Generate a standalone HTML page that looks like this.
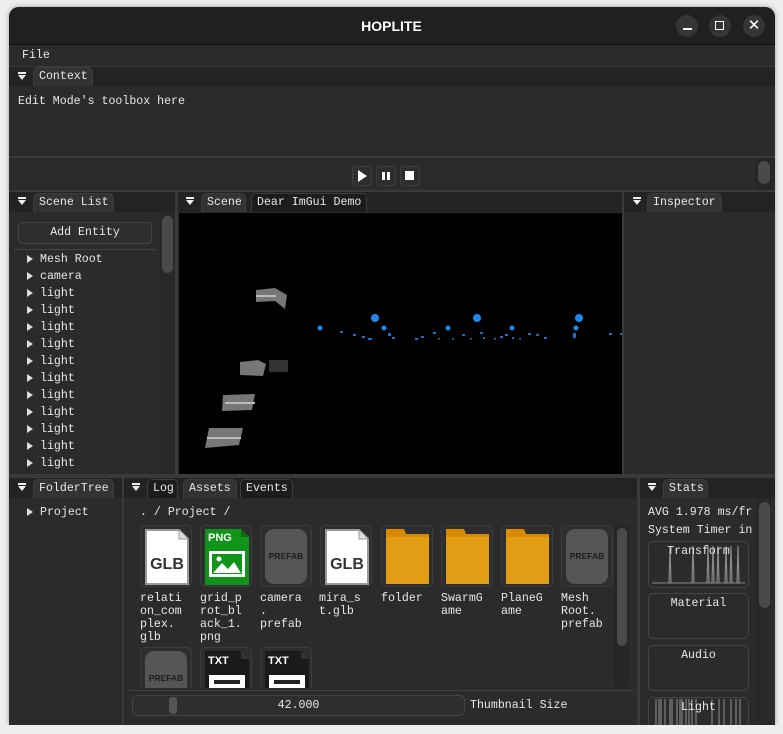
<!DOCTYPE html>
<html><head><meta charset="utf-8"><style>
*{margin:0;padding:0;box-sizing:border-box}
body{width:783px;height:734px;background:#efefef;position:relative;overflow:hidden;font-family:"Liberation Mono",monospace;font-size:11.6px;color:#e8e8e8}
.a{position:absolute}
.t{position:absolute;white-space:pre;line-height:13px}
.win{left:9px;top:7px;width:766px;height:718px;background:#2b2b2b;border-radius:10px 10px 0 0;overflow:hidden;box-shadow:0 0 6px rgba(0,0,0,.35)}
.tabbar{position:absolute;background:#232323;height:20px}
.tab{position:absolute;height:19px;background:#333;border-radius:5px 5px 0 0;border:1px solid #3d3d3d;border-bottom:none;padding:2px 0 0 5px}
.tab.dk{background:#1c1c1c}
.col{position:absolute;width:0;height:0;border-left:4px solid transparent;border-right:4px solid transparent;border-top:5px solid #eee}
.col:before{content:"";position:absolute;left:-4px;top:-8px;width:8px;height:2px;background:#eee}
.tri{position:absolute;width:0;height:0;border-top:4px solid transparent;border-bottom:4px solid transparent;border-left:6px solid #ddd}
.sep{position:absolute;background:#3a3a3a}
.tile{position:absolute;width:52px;height:62px;border:1px solid #3c3c3c;border-radius:5px;background:#2e2e2e}
.lbl{position:absolute;white-space:pre;line-height:13px}
.box{position:absolute;left:648px;width:101px;border:1px solid #444;border-radius:5px;background:#2b2b2b}
</style></head><body>
<div class="a win">
</div>
<!-- title bar -->
<div class="a" style="left:9px;top:7px;width:766px;height:37px;background:#202020;border-radius:10px 10px 0 0"></div>
<div class="a" style="left:0;top:18px;width:783px;text-align:center;font-family:'Liberation Sans',sans-serif;font-weight:bold;font-size:14px;color:#fff">HOPLITE</div>
<div class="a" style="left:676px;top:15px;width:22px;height:22px;border-radius:50%;background:#353535"></div>
<div class="a" style="left:683px;top:28px;width:9px;height:1.5px;background:#fff"></div>
<div class="a" style="left:709px;top:15px;width:22px;height:22px;border-radius:50%;background:#353535"></div>
<div class="a" style="left:715px;top:21px;width:9px;height:9px;border:1.3px solid #fff"></div>
<div class="a" style="left:743px;top:15px;width:22px;height:22px;border-radius:50%;background:#353535;color:#fff;font-family:'Liberation Sans',sans-serif;font-size:15px;text-align:center;line-height:22px">✕</div>
<div class="a" style="left:9px;top:44px;width:766px;height:1px;background:#111"></div>
<!-- menu -->
<div class="t" style="left:22px;top:49px">File</div>
<div class="sep" style="left:9px;top:66px;width:766px;height:1px"></div>
<div class="tabbar" style="left:9px;top:67px;width:766px;height:19px"></div>
<div class="col" style="left:18px;top:75px"></div>
<div class="tab" style="left:33px;top:67px;width:60px">Context</div>
<div class="t" style="left:18px;top:95px">Edit Mode's toolbox here</div>
<div class="sep" style="left:9px;top:156px;width:766px;height:2px"></div>
<div class="a" style="left:755px;top:158px;width:20px;height:32px;background:#262626"></div>
<div class="a" style="left:758px;top:161px;width:12px;height:23px;background:#4a4a4a;border-radius:6px"></div>
<div class="a" style="left:352px;top:166px;width:20px;height:20px;border:1px solid #3e3e3e;border-radius:4px;background:#2e2e2e"></div>
<div class="a" style="left:358px;top:170px;width:0;height:0;border-top:6px solid transparent;border-bottom:6px solid transparent;border-left:9px solid #fff"></div>
<div class="a" style="left:376px;top:166px;width:20px;height:20px;border:1px solid #3e3e3e;border-radius:4px;background:#2e2e2e"></div>
<div class="a" style="left:382px;top:172px;width:3px;height:8px;background:#fff"></div>
<div class="a" style="left:387px;top:172px;width:3px;height:8px;background:#fff"></div>
<div class="a" style="left:400px;top:166px;width:20px;height:20px;border:1px solid #3e3e3e;border-radius:4px;background:#2e2e2e"></div>
<div class="a" style="left:405px;top:171px;width:9px;height:9px;background:#fff"></div>
<div class="sep" style="left:9px;top:190px;width:766px;height:2px"></div>
<!-- scene list -->
<div class="tabbar" style="left:9px;top:192px;width:166px"></div>
<div class="col" style="left:18px;top:200px"></div>
<div class="tab" style="left:33px;top:193px;width:81px">Scene List</div>
<div class="a" style="left:18px;top:222px;width:134px;height:22px;border:1px solid #444;border-radius:4px;background:#2e2e2e;text-align:center;line-height:20px">Add Entity</div>
<div class="a" style="left:160px;top:213px;width:15px;height:261px;background:#282828"></div>
<div class="a" style="left:162px;top:216px;width:11px;height:57px;background:#4a4a4a;border-radius:6px"></div>
<div class="a" style="left:14px;top:249px;width:142px;height:1px;background:#444"></div>
<div class="tri" style="left:27px;top:255px"></div><div class="t" style="left:40px;top:253px">Mesh Root</div>
<div class="tri" style="left:27px;top:272px"></div><div class="t" style="left:40px;top:270px">camera</div>
<div class="tri" style="left:27px;top:289px"></div><div class="t" style="left:40px;top:287px">light</div>
<div class="tri" style="left:27px;top:306px"></div><div class="t" style="left:40px;top:304px">light</div>
<div class="tri" style="left:27px;top:323px"></div><div class="t" style="left:40px;top:321px">light</div>
<div class="tri" style="left:27px;top:340px"></div><div class="t" style="left:40px;top:338px">light</div>
<div class="tri" style="left:27px;top:357px"></div><div class="t" style="left:40px;top:355px">light</div>
<div class="tri" style="left:27px;top:374px"></div><div class="t" style="left:40px;top:372px">light</div>
<div class="tri" style="left:27px;top:391px"></div><div class="t" style="left:40px;top:389px">light</div>
<div class="tri" style="left:27px;top:408px"></div><div class="t" style="left:40px;top:406px">light</div>
<div class="tri" style="left:27px;top:425px"></div><div class="t" style="left:40px;top:423px">light</div>
<div class="tri" style="left:27px;top:442px"></div><div class="t" style="left:40px;top:440px">light</div>
<div class="tri" style="left:27px;top:459px"></div><div class="t" style="left:40px;top:457px">light</div>
<div class="sep" style="left:175px;top:192px;width:3px;height:283px"></div>
<!-- scene -->
<div class="tabbar" style="left:178px;top:192px;width:446px"></div>
<div class="col" style="left:186px;top:200px"></div>
<div class="tab" style="left:201px;top:193px;width:45px">Scene</div>
<div class="tab dk" style="left:251px;top:193px;width:116px">Dear ImGui Demo</div>
<div class="a" style="left:179px;top:213px;width:443px;height:261px;background:#000;overflow:hidden">
<svg width="443" height="261" viewBox="179 213 443 261">
<g fill="#777"><polygon points="256,290 275,288 287,295 285,309 275,301 256,302"/><polygon points="240,362 258,360 266,364 263,376 240,375"/><polygon points="223,395 255,394 252,410 222,411"/><polygon points="209,428 243,428 239,445 205,448"/></g>
<g fill="#bbb"><rect x="256" y="295" width="20" height="2"/><rect x="225" y="402" width="30" height="2"/><rect x="207" y="437" width="34" height="2"/></g>
<rect x="269" y="360" width="19" height="12" fill="#333"/>
<g fill="#1e88f0"><circle cx="375" cy="318" r="4"/><circle cx="477" cy="318" r="4"/><circle cx="579" cy="318" r="4"/><circle cx="320" cy="328" r="2.5"/><circle cx="384" cy="328" r="2.5"/><circle cx="448" cy="328" r="2.5"/><circle cx="512" cy="328" r="2.5"/><circle cx="576" cy="328" r="2.5"/></g>
<g fill="#1c6ec4"><rect x="340" y="331" width="3" height="2"/><rect x="353" y="334" width="3" height="2"/><rect x="362" y="336" width="3" height="2"/><rect x="368" y="338" width="4" height="2"/><rect x="388" y="333" width="3" height="3"/><rect x="392" y="337" width="3" height="2"/><rect x="415" y="338" width="3" height="2"/><rect x="421" y="336" width="3" height="2"/><rect x="433" y="332" width="3" height="2"/><rect x="438" y="338" width="2" height="1.5"/><rect x="452" y="338" width="2" height="1.5"/><rect x="462" y="334" width="3" height="2"/><rect x="470" y="338" width="2" height="1.5"/><rect x="480" y="332" width="3" height="2"/><rect x="483" y="337" width="2" height="2"/><rect x="494" y="338" width="2" height="1.5"/><rect x="500" y="336" width="3" height="2"/><rect x="505" y="334" width="3" height="2"/><rect x="512" y="337" width="2" height="2"/><rect x="519" y="338" width="2" height="1.5"/><rect x="528" y="333" width="3" height="2"/><rect x="536" y="334" width="3" height="2"/><rect x="544" y="337" width="3" height="2"/><rect x="573" y="333" width="3" height="5"/><rect x="609" y="333" width="3" height="2"/><rect x="620" y="333" width="2" height="2"/></g>
</svg></div>
<div class="sep" style="left:622px;top:192px;width:2px;height:283px"></div>
<!-- inspector -->
<div class="tabbar" style="left:624px;top:192px;width:151px"></div>
<div class="col" style="left:633px;top:200px"></div>
<div class="tab" style="left:647px;top:193px;width:75px">Inspector</div>
<div class="sep" style="left:9px;top:474px;width:766px;height:4px"></div>
<!-- folder tree -->
<div class="tabbar" style="left:9px;top:478px;width:113px"></div>
<div class="col" style="left:18px;top:486px"></div>
<div class="tab" style="left:33px;top:479px;width:81px">FolderTree</div>
<div class="tri" style="left:27px;top:508px"></div><div class="t" style="left:40px;top:506px">Project</div>
<div class="sep" style="left:122px;top:478px;width:2px;height:247px"></div>
<!-- assets -->
<div class="tabbar" style="left:124px;top:478px;width:514px"></div>
<div class="col" style="left:132px;top:486px"></div>
<div class="tab dk" style="left:147px;top:479px;width:31px">Log</div>
<div class="tab" style="left:183px;top:479px;width:54px">Assets</div>
<div class="tab dk" style="left:240px;top:479px;width:53px">Events</div>
<div class="t" style="left:140px;top:506px">. / Project /</div>
<div class="a" style="left:614px;top:525px;width:15px;height:162px;background:#262626"></div>
<div class="a" style="left:617px;top:528px;width:10px;height:118px;background:#4a4a4a;border-radius:5px"></div>
<!-- tiles row1 -->
<div class="tile" style="left:140px;top:525px"></div>
<svg class="a" style="left:145px;top:529px" width="44" height="56"><path d="M1 1H34L43 10V55H1Z" fill="#fff" stroke="#999" stroke-width="2"/><path d="M34 1V10H43" fill="#ddd" stroke="#999"/><text x="22" y="40" font-family="Liberation Sans" font-size="16" font-weight="bold" fill="#333" text-anchor="middle">GLB</text></svg>
<div class="tile" style="left:200px;top:525px"></div>
<svg class="a" style="left:205px;top:529px" width="44" height="56"><path d="M0 0H36L44 8V56H0Z" fill="#10951a"/><path d="M36 0V8H44" fill="#0a6b10"/><text x="3" y="12" font-family="Liberation Sans" font-size="11" font-weight="bold" fill="#fff">PNG</text><rect x="4" y="22" width="36" height="26" fill="#fff"/><rect x="7" y="25" width="30" height="20" fill="#10951a"/><path d="M8 44L17 34L23 40L29 33L36 44Z" fill="#fff"/><circle cx="14" cy="30" r="2.5" fill="#fff"/></svg>
<div class="tile" style="left:260px;top:525px"></div>
<div class="a" style="left:265px;top:529px;width:42px;height:55px;background:#555;border-radius:9px;color:#1e1e1e;font-family:'Liberation Sans',sans-serif;font-weight:bold;font-size:8.5px;text-align:center;line-height:55px">PREFAB</div>
<div class="tile" style="left:320px;top:525px"></div>
<svg class="a" style="left:325px;top:529px" width="44" height="56"><path d="M1 1H34L43 10V55H1Z" fill="#fff" stroke="#999" stroke-width="2"/><path d="M34 1V10H43" fill="#ddd" stroke="#999"/><text x="22" y="40" font-family="Liberation Sans" font-size="16" font-weight="bold" fill="#333" text-anchor="middle">GLB</text></svg>
<div class="tile" style="left:381px;top:525px"></div>
<svg class="a" style="left:386px;top:529px" width="43" height="55"><path d="M0 0H18L20 5H43V55H0Z" fill="#d98a00"/><rect x="0" y="8" width="43" height="47" fill="#e19e14"/></svg>
<div class="tile" style="left:441px;top:525px"></div>
<svg class="a" style="left:446px;top:529px" width="43" height="55"><path d="M0 0H18L20 5H43V55H0Z" fill="#d98a00"/><rect x="0" y="8" width="43" height="47" fill="#e19e14"/></svg>
<div class="tile" style="left:501px;top:525px"></div>
<svg class="a" style="left:506px;top:529px" width="43" height="55"><path d="M0 0H18L20 5H43V55H0Z" fill="#d98a00"/><rect x="0" y="8" width="43" height="47" fill="#e19e14"/></svg>
<div class="tile" style="left:561px;top:525px"></div>
<div class="a" style="left:566px;top:529px;width:42px;height:55px;background:#555;border-radius:9px;color:#1e1e1e;font-family:'Liberation Sans',sans-serif;font-weight:bold;font-size:8.5px;text-align:center;line-height:55px">PREFAB</div>
<div class="lbl" style="left:140px;top:592px">relati
on_com
plex.
glb</div>
<div class="lbl" style="left:200px;top:592px">grid_p
rot_bl
ack_1.
png</div>
<div class="lbl" style="left:260px;top:592px">camera
.
prefab</div>
<div class="lbl" style="left:319px;top:592px">mira_s
t.glb</div>
<div class="lbl" style="left:381px;top:592px">folder</div>
<div class="lbl" style="left:441px;top:592px">SwarmG
ame</div>
<div class="lbl" style="left:501px;top:592px">PlaneG
ame</div>
<div class="lbl" style="left:561px;top:592px">Mesh
Root.
prefab</div>
<!-- row2 -->
<div class="a" style="left:130px;top:645px;width:482px;height:43px;overflow:hidden">
<div class="tile" style="left:10px;top:2px"></div>
<div class="a" style="left:15px;top:6px;width:42px;height:55px;background:#555;border-radius:9px;color:#1e1e1e;font-family:'Liberation Sans',sans-serif;font-weight:bold;font-size:8.5px;text-align:center;line-height:55px">PREFAB</div>
<div class="tile" style="left:70px;top:2px"></div>
<svg class="a" style="left:75px;top:6px" width="44" height="56"><path d="M0 0H36L44 8V56H0Z" fill="#1a1a1a"/><path d="M36 0V8H44" fill="#333"/><text x="3" y="13" font-family="Liberation Sans" font-size="11" font-weight="bold" fill="#fff">TXT</text><rect x="4" y="24" width="36" height="20" fill="#fff"/><rect x="9" y="29" width="26" height="4" fill="#222"/></svg>
<div class="tile" style="left:130px;top:2px"></div>
<svg class="a" style="left:135px;top:6px" width="44" height="56"><path d="M0 0H36L44 8V56H0Z" fill="#1a1a1a"/><path d="M36 0V8H44" fill="#333"/><text x="3" y="13" font-family="Liberation Sans" font-size="11" font-weight="bold" fill="#fff">TXT</text><rect x="4" y="24" width="36" height="20" fill="#fff"/><rect x="9" y="29" width="26" height="4" fill="#222"/></svg>
</div>
<div class="a" style="left:128px;top:690px;width:507px;height:1px;background:#3e3e3e"></div>
<div class="a" style="left:132px;top:695px;width:333px;height:21px;border:1px solid #444;border-radius:5px;background:#2e2e2e;text-align:center;line-height:19px">42.000</div>
<div class="a" style="left:169px;top:697px;width:8px;height:17px;background:#555;border-radius:3px"></div>
<div class="t" style="left:470px;top:699px">Thumbnail Size</div>
<div class="sep" style="left:637px;top:478px;width:3px;height:247px"></div>
<!-- stats -->
<div class="tabbar" style="left:640px;top:478px;width:135px"></div>
<div class="col" style="left:648px;top:486px"></div>
<div class="tab" style="left:663px;top:479px;width:45px">Stats</div>
<div class="a" style="left:756px;top:498px;width:15px;height:227px;background:#282828"></div>
<div class="a" style="left:759px;top:502px;width:11px;height:106px;background:#4a4a4a;border-radius:6px"></div>
<div class="t" style="left:648px;top:506px">AVG 1.978 ms/fr</div>
<div class="t" style="left:648px;top:524px">System Timer in</div>
<div class="box" style="top:541px;height:47px"></div>
<svg class="a" style="left:652px;top:543px" width="93" height="43"><path d="M0 40H93" stroke="#777" stroke-width="1.3"/><g stroke="#888" stroke-width="1.2" fill="none"><path d="M17 40L18 3L19 40M40 40L41 3L42 40M55 40L56 3L57 40M60 40L61 3L62 40M65 40L66 3L67 40M73 40L74 3L75 40M78 40L79 3L80 40M85 40L86 3L87 40"/></g></svg>
<div class="t" style="left:648px;top:545px;width:101px;text-align:center">Transform</div>
<div class="box" style="top:593px;height:46px"></div>
<div class="t" style="left:648px;top:597px;width:101px;text-align:center">Material</div>
<div class="box" style="top:645px;height:46px"></div>
<div class="t" style="left:648px;top:649px;width:101px;text-align:center">Audio</div>
<div class="box" style="top:697px;height:30px"></div>
<svg class="a" style="left:652px;top:699px" width="93" height="26"><g stroke="#888" stroke-width="1.1"><path d="M4 0V26M7 0V26M9 0V26M13 0V26M18 0V26M20 0V26M25 0V26M28 0V26M30 0V26M34 0V26M37 0V26M40 0V26M44 0V26M60 0V26M67 0V26M72 0V26M79 0V26M84 0V26M88 0V26"/></g></svg>
<div class="t" style="left:648px;top:701px;width:101px;text-align:center">Light</div>
<div class="a" style="left:0;top:725px;width:783px;height:9px;background:#efefef"></div>
</body></html>
